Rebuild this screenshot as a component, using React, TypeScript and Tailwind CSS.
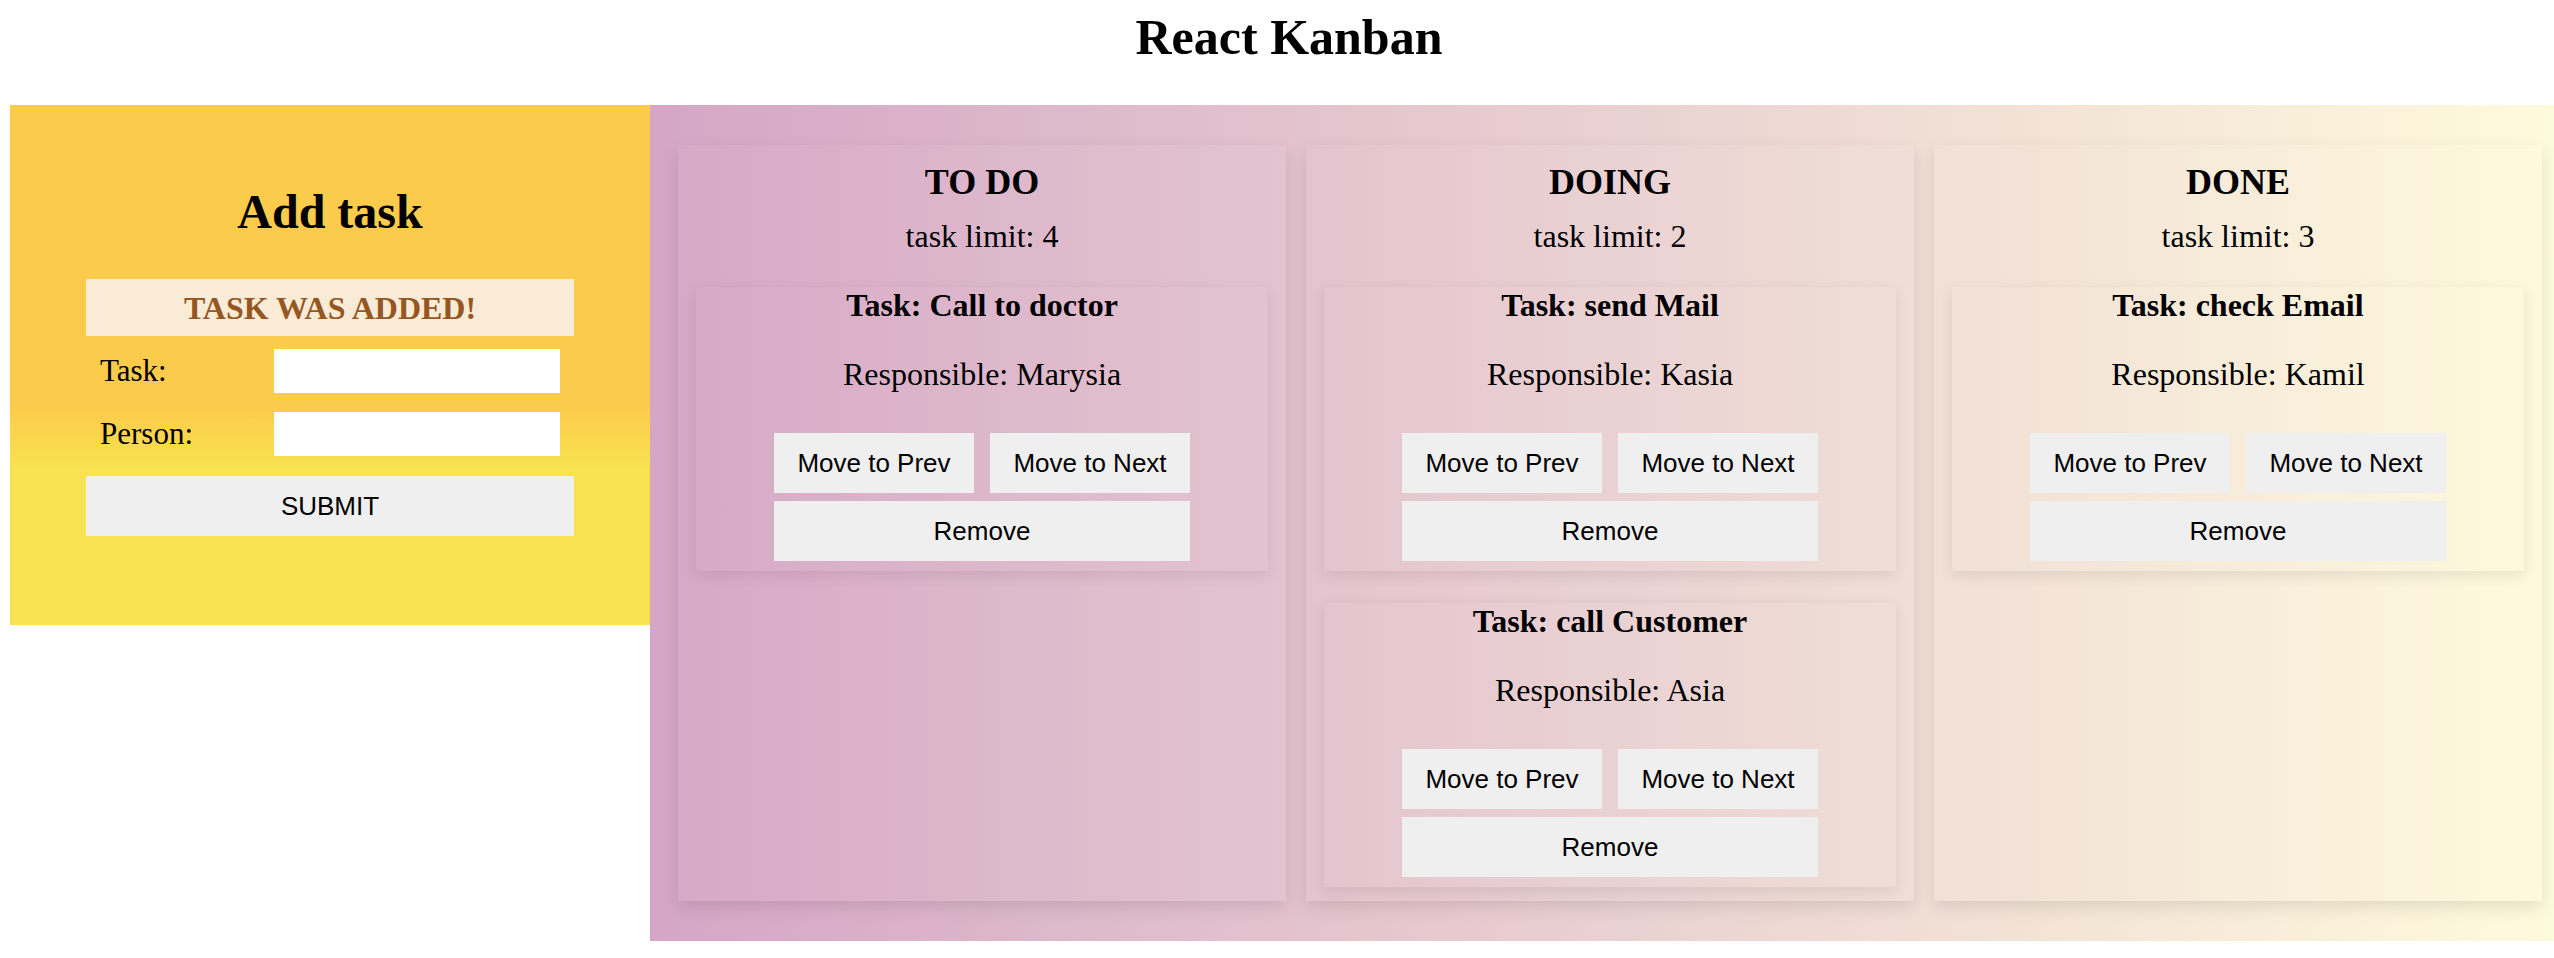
import React, { useState } from 'react';

type Task = {
  id: number;
  name: string;
  user: string;
  idColumn: number;
};

type Column = {
  id: number;
  name: string;
  limit: number;
};

const columns: Column[] = [
  { id: 1, name: 'TO DO', limit: 4 },
  { id: 2, name: 'DOING', limit: 2 },
  { id: 3, name: 'DONE', limit: 3 },
];

const initialTasks: Task[] = [
  { id: 1, name: 'Call to doctor', user: 'Marysia', idColumn: 1 },
  { id: 2, name: 'send Mail', user: 'Kasia', idColumn: 2 },
  { id: 3, name: 'call Customer', user: 'Asia', idColumn: 2 },
  { id: 4, name: 'check Email', user: 'Kamil', idColumn: 3 },
];

const btn =
  'h-[60px] bg-[#efefef] text-black text-[26px] font-["Liberation_Sans",Arial,sans-serif] cursor-pointer';

const TaskCard: React.FC<{
  task: Task;
  onMove: (id: number, dir: number) => void;
  onRemove: (id: number) => void;
}> = ({ task, onMove, onRemove }) => (
  <div className="pb-[10px] text-center shadow-[0_4px_14px_rgba(0,0,0,0.09)]">
    <h3 className="text-[32px] leading-[37px] font-bold">Task: {task.name}</h3>
    <p className="mt-[32px] text-[32px] leading-[37px]">Responsible: {task.user}</p>
    <div className="mt-[40px] flex flex-col items-center gap-2">
      <div className="flex gap-4">
        <button className={`${btn} w-[200px]`} onClick={() => onMove(task.id, -1)}>
          Move to Prev
        </button>
        <button className={`${btn} w-[200px]`} onClick={() => onMove(task.id, 1)}>
          Move to Next
        </button>
      </div>
      <button className={`${btn} w-[416px]`} onClick={() => onRemove(task.id)}>
        Remove
      </button>
    </div>
  </div>
);

const App: React.FC = () => {
  const [tasks, setTasks] = useState<Task[]>(initialTasks);
  const [name, setName] = useState('');
  const [user, setUser] = useState('');
  const [message] = useState('TASK WAS ADDED!');

  const moveTask = (id: number, dir: number) => {
    setTasks(prev =>
      prev.map(t => {
        if (t.id !== id) return t;
        const next = t.idColumn + dir;
        if (next < 1 || next > columns.length) return t;
        return { ...t, idColumn: next };
      })
    );
  };

  const removeTask = (id: number) => {
    setTasks(prev => prev.filter(t => t.id !== id));
  };

  const handleSubmit = (e: React.FormEvent) => {
    e.preventDefault();
    if (!name || !user) return;
    setTasks(prev => [...prev, { id: Date.now(), name, user, idColumn: 1 }]);
    setName('');
    setUser('');
  };

  return (
    <div className="min-h-screen bg-white text-black font-['Liberation_Serif','Times_New_Roman',serif]">
      <h1 className="pt-[8px] pl-6 text-center text-[50px] leading-[58px] font-bold">React Kanban</h1>

      <div className="mt-[39px] flex items-start">
        {/* Add task form */}
        <aside className="ml-[10px] w-[640px] h-[520px] shrink-0 bg-[linear-gradient(180deg,#fbcb4b_58%,#f8e250_70%)]">
          <h2 className="pt-[79px] text-center text-[48px] leading-[55px] font-bold">Add task</h2>
          <form onSubmit={handleSubmit} className="mx-auto mt-[40px] w-[488px]">
            <div className="h-[57px] flex items-center justify-center bg-[#faebd7] text-[#96561f] text-[32px] font-bold">
              {message}
            </div>
            <label className="mt-[12px] px-[14px] flex items-center text-[31px]">
              <span className="w-[174px]">Task:</span>
              <input
                value={name}
                onChange={e => setName(e.target.value)}
                className="w-[286px] h-[44px] bg-white outline-none px-2"
              />
            </label>
            <label className="mt-[16px] px-[14px] flex items-center text-[31px]">
              <span className="w-[174px]">Person:</span>
              <input
                value={user}
                onChange={e => setUser(e.target.value)}
                className="w-[286px] h-[44px] bg-white outline-none px-2"
              />
            </label>
            <button type="submit" className={`${btn} mt-[19px] w-full`}>
              SUBMIT
            </button>
          </form>
        </aside>

        {/* Board */}
        <main className="flex-1 flex gap-[20px] pl-[28px] pr-[12px] py-[40px] bg-[linear-gradient(90deg,#d5a6c6,#fefadc)]">
          {columns.map(col => (
            <section
              key={col.id}
              className="flex-1 pt-[17px] pb-[14px] text-center bg-white/[0.03] shadow-[0_6px_16px_rgba(0,0,0,0.1)]"
            >
              <h2 className="text-[36px] leading-[41px] font-bold">{col.name}</h2>
              <p className="mt-[15px] text-[32px] leading-[37px]">task limit: {col.limit}</p>
              <div className="mt-[32px] px-[18px] flex flex-col gap-[32px]">
                {tasks
                  .filter(t => t.idColumn === col.id)
                  .map(t => (
                    <TaskCard key={t.id} task={t} onMove={moveTask} onRemove={removeTask} />
                  ))}
              </div>
            </section>
          ))}
        </main>
      </div>
    </div>
  );
};

export default App;
